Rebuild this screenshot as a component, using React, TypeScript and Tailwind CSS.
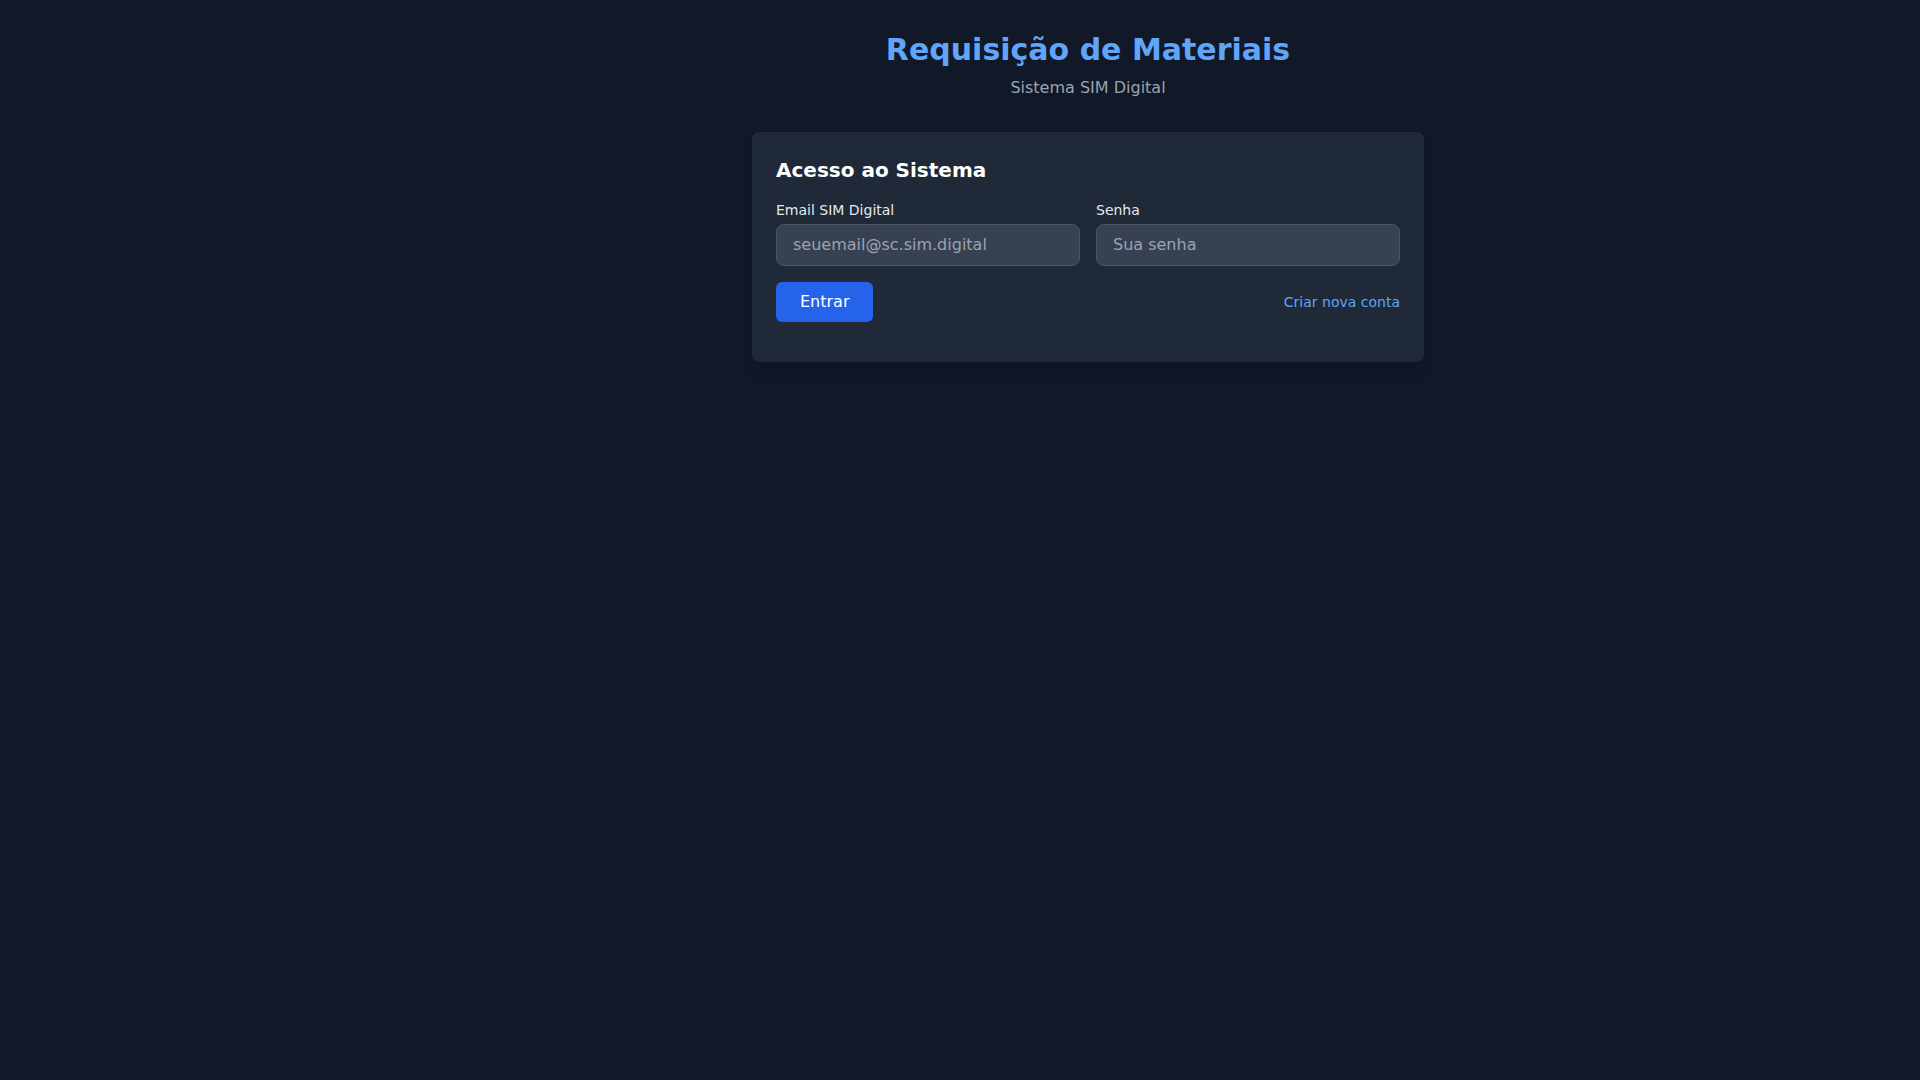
import { useState } from 'react';

const LoginCard = () => {
  const [email, setEmail] = useState('');
  const [senha, setSenha] = useState('');

  return (
    <div className="rounded-lg bg-[#1f2937] p-6 pb-10 shadow-lg">
      <h2 className="mb-4 text-xl font-bold text-white">Acesso ao Sistema</h2>
      <form
        className="flex flex-col gap-4"
        onSubmit={(e) => {
          e.preventDefault();
        }}
      >
        <div className="grid grid-cols-2 gap-4">
          <div>
            <label className="mb-1 block text-sm text-[#e5e7eb]">Email SIM Digital</label>
            <input
              type="email"
              value={email}
              onChange={(e) => setEmail(e.target.value)}
              placeholder="seuemail@sc.sim.digital"
              className="w-full rounded-lg border border-[#4b5563] bg-[#374151] px-4 py-2 text-base text-white placeholder-[#9ca3af] outline-none"
            />
          </div>
          <div>
            <label className="mb-1 block text-sm text-[#e5e7eb]">Senha</label>
            <input
              type="password"
              value={senha}
              onChange={(e) => setSenha(e.target.value)}
              placeholder="Sua senha"
              className="w-full rounded-lg border border-[#4b5563] bg-[#374151] px-4 py-2 text-base text-white placeholder-[#9ca3af] outline-none"
            />
          </div>
        </div>
        <div className="flex items-center justify-between">
          <button type="submit" className="rounded-md bg-[#2563eb] px-6 py-2 text-base text-white">
            Entrar
          </button>
          <a href="#" className="text-sm text-[#60a5fa]">
            Criar nova conta
          </a>
        </div>
      </form>
    </div>
  );
};

export default function App() {
  return (
    <div
      className="min-h-screen bg-[#111827]"
      style={{ fontFamily: '"DejaVu Sans", sans-serif' }}
    >
      <main className="ml-64 px-8 pt-8">
        <div className="mx-auto max-w-2xl">
          <header className="mb-8 text-center">
            <h1 className="text-3xl font-bold text-[#60a5fa]">Requisição de Materiais</h1>
            <p className="mt-2 text-base text-[#9ca3af]">Sistema SIM Digital</p>
          </header>
          <LoginCard />
        </div>
      </main>
    </div>
  );
}
